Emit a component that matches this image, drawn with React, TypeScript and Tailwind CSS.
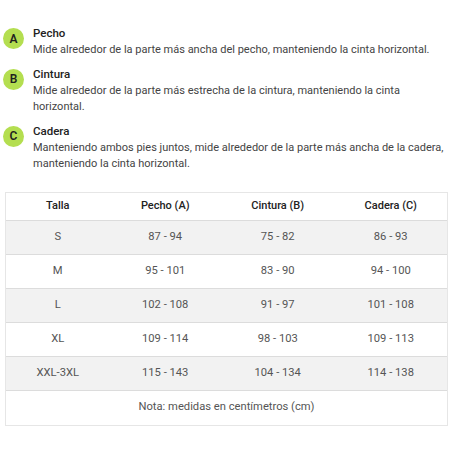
import React from "react";

const items = [
  { l: "A", t: "Pecho", d: "Mide alrededor de la parte más ancha del pecho, manteniendo la cinta horizontal." },
  { l: "B", t: "Cintura", d: "Mide alrededor de la parte más estrecha de la cintura, manteniendo la cinta horizontal." },
  { l: "C", t: "Cadera", d: "Manteniendo ambos pies juntos, mide alrededor de la parte más ancha de la cadera, manteniendo la cinta horizontal." },
];

const rows = [
  ["S", "87 - 94", "75 - 82", "86 - 93"],
  ["M", "95 - 101", "83 - 90", "94 - 100"],
  ["L", "102 - 108", "91 - 97", "101 - 108"],
  ["XL", "109 - 114", "98 - 103", "109 - 113"],
  ["XXL-3XL", "115 - 143", "104 - 134", "114 - 138"],
];

export default function App() {
  return (
    <div className="w-[450px] h-[450px] bg-white overflow-hidden" style={{ fontFamily: "Roboto, 'Liberation Sans', sans-serif" }}>
      <div className="pt-[25px] pl-[3px] flex flex-col gap-[7px]">
        {items.map((it) => (
          <div key={it.l} className="flex gap-[9px]">
            <div className="w-[21px] h-[21px] mt-[3px] shrink-0 rounded-full bg-[#b4de50] flex items-center justify-center text-[12px] font-semibold text-[#1f1f1f]">
              {it.l}
            </div>
            <div className="flex flex-col">
              <div className="text-[11.5px] leading-[17px] font-medium text-[#222]">{it.t}</div>
              <div className="text-[11px] leading-[16.5px] text-[#444] w-[418px]">{it.d}</div>
            </div>
          </div>
        ))}
      </div>
      <div className="mt-[19px] ml-[5px] w-[443px] border border-[#e6e6e6]">
        <table className="w-full border-collapse text-[11.2px] text-center">
          <colgroup>
            <col className="w-[104px]" />
            <col className="w-[112px]" />
            <col className="w-[114px]" />
            <col className="w-[113px]" />
          </colgroup>
          <thead>
            <tr className="h-[28px] bg-white text-[#222] font-medium">
              <th className="font-medium text-[11px]">Talla</th>
              <th className="font-medium text-[11px]">Pecho (A)</th>
              <th className="font-medium text-[11px]">Cintura (B)</th>
              <th className="font-medium text-[11px]">Cadera (C)</th>
            </tr>
          </thead>
          <tbody>
            {rows.map((r, i) => (
              <tr key={r[0]} className={`h-[34px] border-t border-[#dcdcdc] text-[#555] ${i % 2 === 0 ? "bg-[#f2f2f2]" : "bg-white"}`}>
                {r.map((c, j) => (
                  <td key={j}>{c}</td>
                ))}
              </tr>
            ))}
            <tr className="h-[34px] border-t border-[#dcdcdc] text-[#555] bg-white">
              <td colSpan={4}>Nota: medidas en centímetros (cm)</td>
            </tr>
          </tbody>
        </table>
      </div>
    </div>
  );
}
